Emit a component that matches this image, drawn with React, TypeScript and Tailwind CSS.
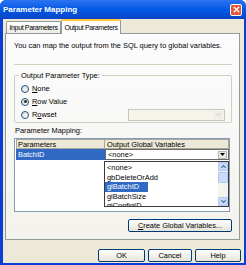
import { ChevronDown, ChevronUp, X } from 'lucide-react';

const listItems = ['<none>', 'gbDeleteOrAdd', 'giBatchID', 'giBatchSize', 'giConfigID'];

function Radio({ checked, label }: { checked?: boolean; label: React.ReactNode }) {
    return (
        <div className="flex h-[13px] items-center gap-[3px]">
            <span className="flex h-[8px] w-[8px] items-center justify-center rounded-full border border-[#1c5180] bg-gradient-to-br from-[#dcdad0] to-white">
                {checked && <span className="h-[3px] w-[3px] rounded-full bg-[#2b2b2b]" />}
            </span>
            <span>{label}</span>
        </div>
    );
}

function XpButton({ children, className }: { children: React.ReactNode; className: string }) {
    return (
        <div
            className={`flex items-center justify-center rounded-[2px] border border-[#003c74] bg-gradient-to-b from-white to-[#e6e4da] ${className}`}
        >
            {children}
        </div>
    );
}

export default function App() {
    return (
        <div className="flex h-[265px] w-[246px] flex-col overflow-hidden rounded-t-[6px] bg-[#0a3ed6] font-['Liberation_Sans',sans-serif] text-[7.4px] leading-none text-black">
            <div className="flex h-[19px] shrink-0 items-center justify-between bg-gradient-to-b from-[#2a74f0] via-[#0058e6] to-[#0a45c8] pl-[3px] pr-[4px]">
                <span className="text-[8px] font-bold text-white">Parameter Mapping</span>
                <span className="flex h-[12px] w-[12px] items-center justify-center rounded-[2px] border border-white bg-[#e2573b]">
                    <X size={9} strokeWidth={3.5} color="white" />
                </span>
            </div>

            <div className="mb-[2px] ml-[3px] mr-[2px] flex flex-1 flex-col bg-[#ece9d8]">
                <div className="flex h-[14px] items-end whitespace-nowrap pl-[3px] pt-[1px] tracking-[-0.35px] text-[7px]">
                    <div className="flex h-[12px] w-[55px] items-center justify-center rounded-t-[2px] border border-b-0 border-[#919b9c] bg-gradient-to-b from-white to-[#ecebe5]">
                        Input Parameters
                    </div>
                    <div className="relative z-10 -mb-[1px] flex h-[15px] w-[60px] items-center justify-center rounded-t-[2px] border-x border-[#919b9c] border-t-2 border-t-[#ffc83c] bg-[#fcfcfe]">
                        Output Parameters
                    </div>
                </div>

                <div className="ml-[2px] mr-[4px] flex h-[207px] flex-col border border-[#919b9c] bg-gradient-to-b from-[#fcfcfe] to-[#f3f2ec] pl-[8px] pr-[7px]">
                    <p className="mt-[8px] h-[8px] whitespace-nowrap">You can map the output from the SQL query to global variables.</p>
                    <div className="mt-[14px] h-[1px] border-t border-[#d5d2c2]" />

                    <div className="relative mt-[10px] h-[48px] rounded-[2px] border border-[#d0d0bf] pl-[6px] pt-[6px]">
                        <span className="absolute -top-[4px] left-[4px] bg-[#f9f9f7] px-[2px]">Output Parameter Type:</span>
                        <Radio label={<><span className="underline">N</span>one</>} />
                        <Radio checked label={<><span className="underline">R</span>ow Value</>} />
                        <div className="flex items-center justify-between pr-[6px]">
                            <Radio label={<>R<span className="underline">o</span>wset</>} />
                            <div className="flex h-[12px] w-[97px] items-center justify-end border border-[#c9c7ba] bg-[#f5f4ea] p-[1px]">
                                <span className="flex h-full w-[9px] items-center justify-center rounded-[1px] bg-[#eeede5]">
                                    <ChevronDown size={7} strokeWidth={3} color="#c9c7ba" />
                                </span>
                            </div>
                        </div>
                    </div>

                    <p className="mt-[4px] pl-[1px]">Parameter Mapping:</p>

                    <div className="relative mt-[4px] h-[74px] w-[216px] border border-[#7f9db9] bg-white pl-[1px]">
                        <div className="flex h-[10px]">
                            <div className="flex w-[89px] items-center border border-[#aca899] bg-[#ece9d8] pl-[1px]">Parameters</div>
                            <div className="flex flex-1 items-center border border-l-0 border-[#aca899] bg-[#ece9d8] pl-[2px]">Output Global Variables</div>
                        </div>
                        <div className="flex h-[11px]">
                            <div className="flex w-[89px] items-center bg-[#316ac5] pl-[2px] text-white">BatchID</div>
                            <div className="flex flex-1 items-center justify-between border border-[#6a6a6a] bg-white pl-[2px] pr-[1px]">
                                <span>&lt;none&gt;</span>
                                <span className="flex h-[8px] w-[9px] items-center justify-center border border-[#b8b6ae] bg-[#ecebe6]">
                                    <svg width="5" height="3" viewBox="0 0 5 3"><path d="M0 0h5L2.5 3z" fill="black" /></svg>
                                </span>
                            </div>
                        </div>

                        <div className="absolute left-[89px] top-[22px] flex h-[46px] w-[125px] border border-[#3c3c3c] bg-white">
                            <div className="flex flex-1 flex-col overflow-hidden pt-[1px]">
                                {listItems.map((item) => (
                                    <div
                                        key={item}
                                        className={`flex h-[9.5px] shrink-0 items-center pl-[2px] ${
                                            item === 'giBatchID' ? 'mr-[70px] bg-[#316ac5] text-white' : ''
                                        }`}
                                    >
                                        {item}
                                    </div>
                                ))}
                            </div>
                            <div className="flex w-[10px] flex-col bg-[#f4f3ee]">
                                <span className="flex h-[9px] items-center justify-center rounded-[1px] border border-[#b5c8f0] bg-[#c8d8fa]">
                                    <ChevronUp size={7} strokeWidth={3.5} color="#4d6185" />
                                </span>
                                <span className="mt-[1px] h-[11px] rounded-[1px] border border-[#b5c8f0] bg-[#cddbfb]" />
                                <span className="flex-1" />
                                <span className="flex h-[9px] items-center justify-center rounded-[1px] border border-[#b5c8f0] bg-[#c8d8fa]">
                                    <ChevronDown size={7} strokeWidth={3.5} color="#4d6185" />
                                </span>
                            </div>
                        </div>
                    </div>

                    <div className="mt-[7px] flex justify-end">
                        <XpButton className="h-[13px] w-[104px]">
                            <span><span className="underline">C</span>reate Global Variables...</span>
                        </XpButton>
                    </div>
                </div>

                <div className="mt-[9px] flex justify-end gap-[3px] pr-[3px]">
                    <XpButton className="h-[13px] w-[47px]">OK</XpButton>
                    <XpButton className="h-[13px] w-[44px]">Cancel</XpButton>
                    <XpButton className="h-[13px] w-[46px]">Help</XpButton>
                </div>
            </div>
        </div>
    );
}
